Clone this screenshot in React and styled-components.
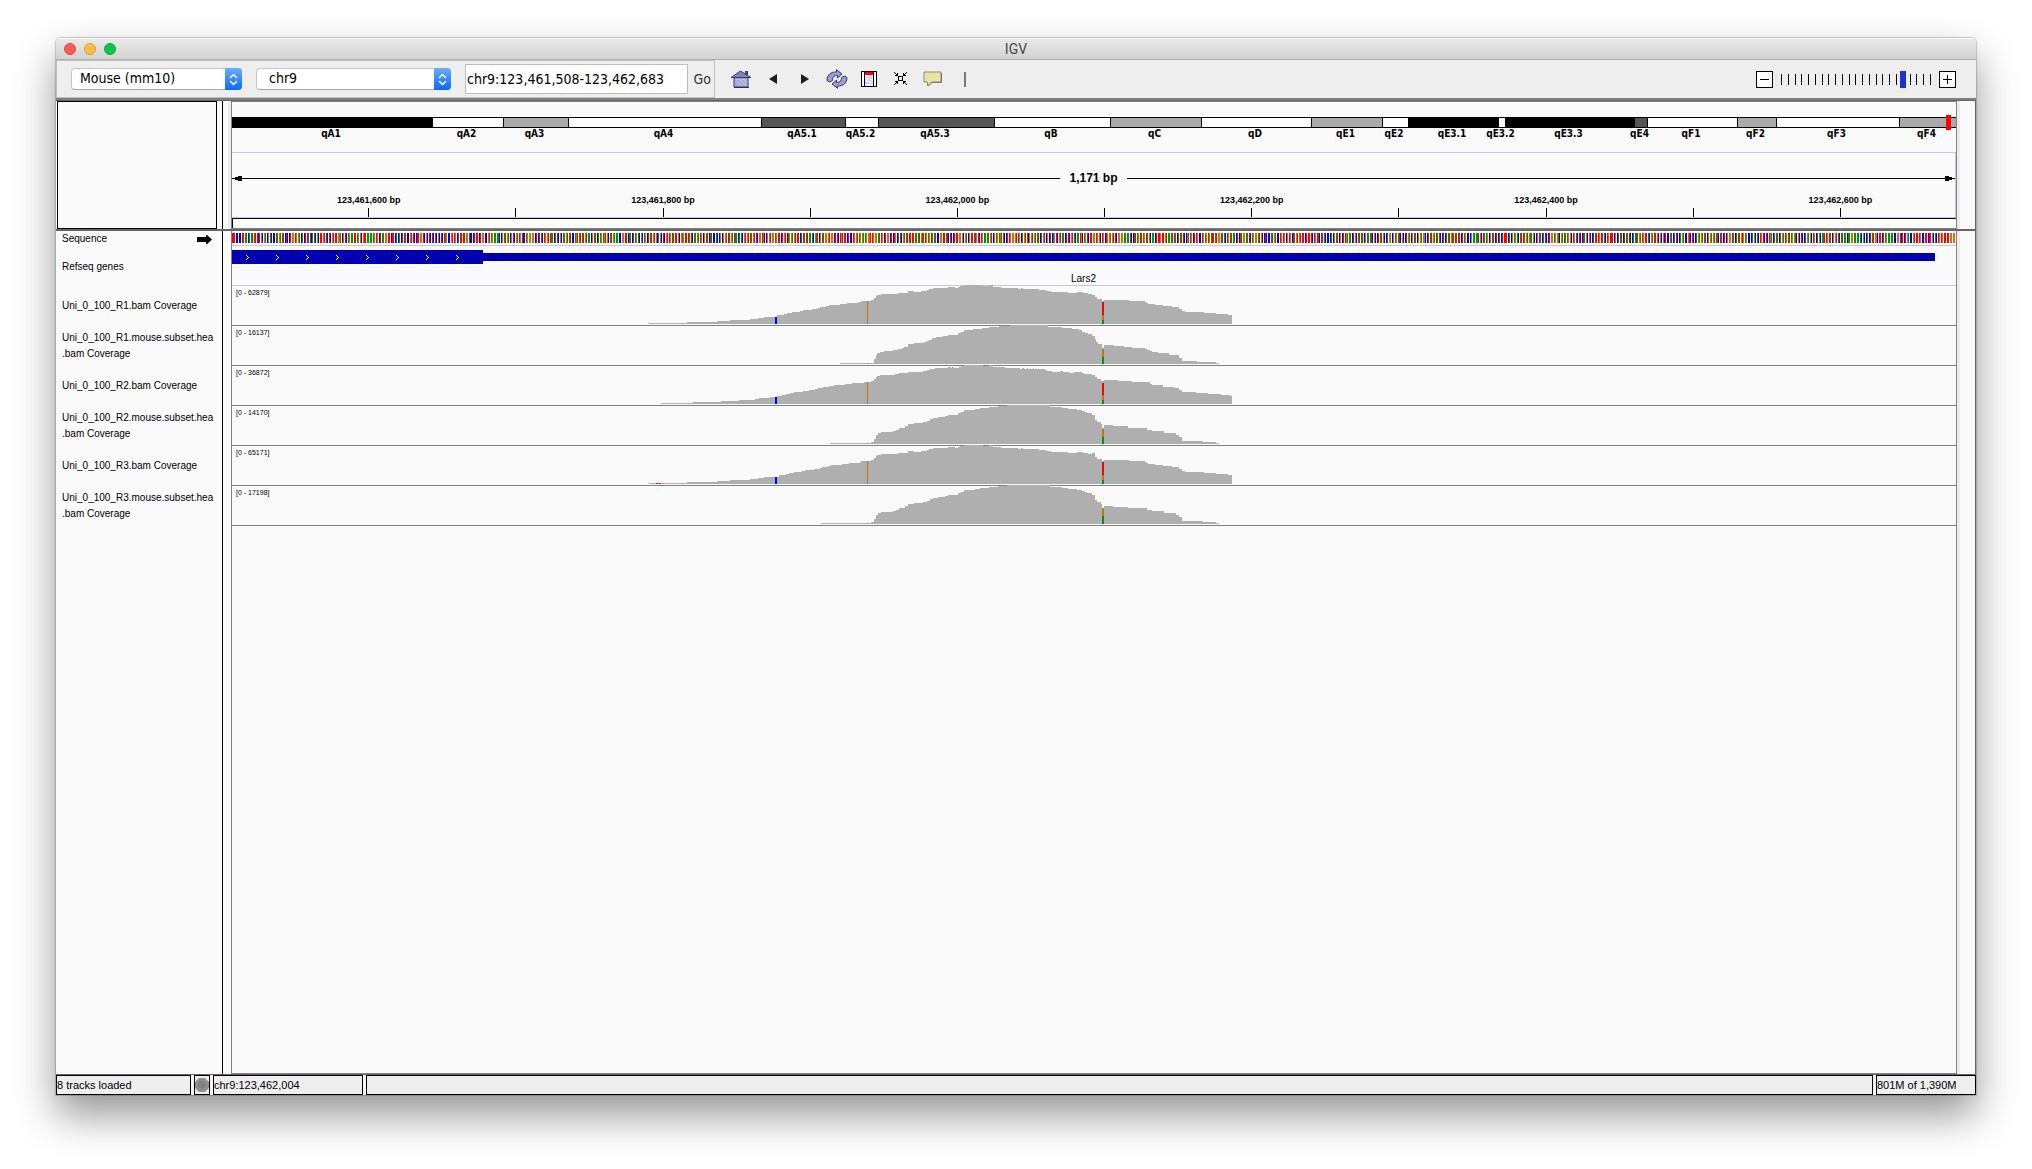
import React, { useState } from "react";
import styled, { createGlobalStyle } from "styled-components";

const LUCIDA = '"DejaVu Sans Condensed", "DejaVu Sans", sans-serif';
const ARIAL = '"Liberation Sans", Arial, sans-serif';

const GlobalStyle = createGlobalStyle`
  *, *::before, *::after { box-sizing: border-box; }
  body { margin: 0; background: #fff; font-family: ${ARIAL}; color: #000; }
  button, input, select { font: inherit; color: inherit; margin: 0; }
`;

/* ---------- data ---------- */

const BANDS = [
  ["qA1", 200, "#000"], ["qA2", 71, "#fff"], ["qA3", 65, "#aaa"], ["qA4", 193, "#fff"],
  ["qA5.1", 84, "#555"], ["qA5.2", 33, "#fff"], ["qA5.3", 116, "#555"], ["qB", 116, "#fff"],
  ["qC", 91, "#aaa"], ["qD", 110, "#fff"], ["qE1", 71, "#aaa"], ["qE2", 26, "#fff"],
  ["qE3.1", 90, "#000"], ["qE3.2", 7, "#fff"], ["qE3.3", 129, "#000"], ["qE4", 13, "#555"],
  ["qF1", 90, "#fff"], ["qF2", 39, "#aaa"], ["qF3", 123, "#fff"], ["qF4", 57, "#aaa"],
];

const TICKS = [
  "123,461,600 bp", "", "123,461,800 bp", "", "123,462,000 bp", "",
  "123,462,200 bp", "", "123,462,400 bp", "", "123,462,600 bp",
];

const WIDTH = 1724;

const deep = [
  [417, 1], [455, 2], [485, 3], [498, 4], [518, 5], [526, 6], [532, 7], [545, 9], [552, 10],
  [555, 11], [560, 12], [568, 13], [571, 14], [580, 15], [586, 16], [588, 17], [594, 18],
  [597, 19], [608, 20], [615, 21], [626, 22], [629, 23], [639, 24], [642, 26], [644, 28],
  [645, 29], [649, 30], [666, 31], [676, 33], [682, 32], [689, 33], [695, 34], [697, 35],
  [701, 36], [716, 37], [723, 36], [726, 37], [728, 38], [732, 39], [751, 38], [757, 39],
  [761, 37], [769, 36], [786, 35], [789, 36], [791, 35], [807, 34], [814, 33], [819, 32],
  [836, 31], [845, 32], [851, 31], [856, 30], [860, 29], [863, 27], [865, 25], [870, 23],
  [872, 24], [897, 23], [913, 22], [914, 21], [916, 20], [923, 19], [931, 18], [940, 17],
  [947, 15], [950, 13], [953, 12], [972, 11], [984, 10], [996, 9], [1000, 0],
];

const deepR2 = [
  [429, 1], [461, 2], [489, 3], [507, 4], [523, 5], [527, 6], [538, 7], [545, 8], [550, 9],
  [554, 10], [558, 11], [562, 12], [571, 13], [577, 14], [583, 15], [586, 16], [591, 17],
  [597, 18], [602, 19], [613, 20], [620, 21], [632, 22], [639, 23], [642, 25], [644, 27],
  [645, 28], [648, 29], [663, 30], [667, 31], [676, 32], [691, 33], [695, 34], [698, 35],
  [703, 36], [716, 37], [719, 36], [720, 37], [722, 36], [727, 37], [729, 38], [732, 39],
  [751, 38], [757, 39], [761, 37], [773, 36], [788, 35], [790, 36], [792, 35], [795, 36],
  [796, 35], [801, 36], [802, 35], [813, 34], [815, 33], [820, 32], [828, 33], [831, 32],
  [837, 31], [842, 32], [850, 31], [852, 30], [860, 29], [863, 27], [865, 25], [869, 23],
  [872, 24], [886, 23], [900, 22], [918, 20], [920, 19], [931, 17], [942, 16], [947, 14],
  [950, 12], [964, 11], [976, 10], [989, 9], [998, 8], [1000, 0],
];

const deepR3 = deep.map(([x, h]) =>
  x >= 545 && x < 629 ? [x + 2, h] : x === 860 ? [x, 31] : [x, h]
);

const subset = [
  [608, 1], [642, 5], [644, 9], [645, 11], [648, 12], [652, 13], [661, 14], [666, 15], [670, 16],
  [672, 17], [676, 20], [682, 21], [692, 22], [695, 23], [697, 24], [700, 26], [704, 27],
  [711, 28], [716, 29], [726, 31], [729, 32], [732, 34], [741, 35], [750, 36], [757, 37],
  [767, 38], [778, 39], [816, 37], [830, 36], [840, 35], [847, 34], [850, 32], [853, 31],
  [856, 30], [860, 28], [863, 25], [864, 22], [866, 20], [870, 16], [872, 19], [882, 18],
  [892, 17], [900, 16], [913, 15], [915, 14], [918, 13], [920, 12], [926, 11], [937, 9],
  [947, 6], [950, 3], [965, 2], [984, 1], [987, 0],
];

const subsetR2 = [
  [598, 1], [639, 2], [642, 5], [644, 9], [646, 11], [649, 12], [661, 13], [664, 14], [667, 16],
  [673, 18], [676, 20], [682, 21], [691, 22], [695, 23], [698, 25], [701, 26], [706, 27],
  [713, 28], [716, 29], [726, 31], [729, 32], [732, 34], [743, 35], [748, 36], [757, 37],
  [766, 38], [775, 39], [818, 37], [830, 36], [836, 35], [845, 34], [850, 33], [852, 32],
  [855, 31], [860, 29], [863, 24], [865, 22], [869, 20], [870, 16], [872, 19], [881, 18],
  [896, 16], [915, 14], [920, 13], [932, 11], [944, 9], [947, 7], [950, 3], [971, 2],
  [984, 1], [987, 0],
];

const subsetR3 = subsetR2.map(([x, h]) =>
  x === 598 ? [589, 1] : x === 872 ? [x, 18] : x === 881 ? [x, 17] : [x, h]
);

const RED = "#ff0000";
const BLUE = "#0000ff";
const ORANGE = "#d17105";
const GREEN = "#009600";

/* each variant is [x, width, from height, to height, colour] */
const deepVariants = (split) => [
  [543, 2, 0, 7, BLUE],
  [635, 1, 0, split + 1, ORANGE],
  [870, 2, 9, split, RED],
  [870, 2, 4, 9, ORANGE],
  [870, 2, 0, 4, GREEN],
];
const subsetVariants = (top) => [
  [635, 1, 0, 1, ORANGE],
  [870, 2, top - 8, top, ORANGE],
  [870, 2, 0, top - 8, GREEN],
];

const TRACKS = [
  { name: ["Uni_0_100_R1.bam Coverage"], range: "[0 - 62879]", steps: deep, variants: deepVariants(22) },
  { name: ["Uni_0_100_R1.mouse.subset.hea", ".bam Coverage"], range: "[0 - 16137]", steps: subset, variants: subsetVariants(15) },
  { name: ["Uni_0_100_R2.bam Coverage"], range: "[0 - 36872]", steps: deepR2, variants: deepVariants(21) },
  { name: ["Uni_0_100_R2.mouse.subset.hea", ".bam Coverage"], range: "[0 - 14170]", steps: subsetR2, variants: subsetVariants(15) },
  {
    name: ["Uni_0_100_R3.bam Coverage"], range: "[0 - 65171]", steps: deepR3,
    variants: [[424, 2, 0, 1, RED], [427, 2, 0, 1, RED], ...deepVariants(22)],
  },
  { name: ["Uni_0_100_R3.mouse.subset.hea", ".bam Coverage"], range: "[0 - 17198]", steps: subsetR3, variants: subsetVariants(16) },
];

const BASELINE = 38;

function areaPath(steps) {
  let d = `M${steps[0][0]} ${BASELINE}`;
  steps.forEach(([x, h]) => {
    d += `H${x}V${BASELINE - h}`;
  });
  return d + "Z";
}

/* one thin bar per base, grouped into one path per nucleotide colour */
function sequencePaths() {
  const colours = [GREEN, BLUE, ORANGE, RED];
  const paths = ["", "", "", ""];
  let seed = 20117;
  for (let i = 0; i < 1171; i += 1) {
    seed = (seed * 1103515245 + 12345) % 2147483648;
    const r = (seed >> 12) % 100;
    const base = r < 24 ? 0 : r < 48 ? 1 : r < 71 ? 2 : 3;
    paths[base] += `M${Math.floor((i * WIDTH) / 1171)} 0h1v10h-1z`;
  }
  return paths.map((d, i) => ({ d, fill: colours[i] }));
}
const SEQUENCE = sequencePaths();

/* ---------- window ---------- */

const Desktop = styled.div`
  min-height: 100vh;
  padding: 38px 56px 74px;
  display: flex;
`;

const Window = styled.main`
  flex: 1;
  min-width: 0;
  display: flex;
  flex-direction: column;
  border-radius: 5px 5px 0 0;
  background: #fafafa;
  box-shadow: 0 0 1px 1px rgba(0, 0, 0, 0.2), 0 20px 40px rgba(0, 0, 0, 0.42);
`;

const TitleBar = styled.header`
  display: grid;
  grid-template-columns: 1fr auto 1fr;
  align-items: center;
  height: 22px;
  padding: 0 8px;
  border-radius: 5px 5px 0 0;
  border-top: 1px solid #f6f6f6;
  border-bottom: 1px solid #adadad;
  background: linear-gradient(#eaeaea, #d2d2d2);
`;

const Lights = styled.div`
  display: flex;
  gap: 8px;
`;

const Light = styled.button`
  width: 12px;
  height: 12px;
  padding: 0;
  border: 1px solid ${(p) => p.$edge};
  border-radius: 50%;
  background: ${(p) => p.$fill};
`;

const Title = styled.h1`
  margin: 0;
  font: 400 14px/18px Roboto, Inter, sans-serif;
  color: #4a4a4a;
`;

/* ---------- toolbar ---------- */

const Toolbar = styled.div`
  display: flex;
  align-items: center;
  height: 38px;
  padding-right: 20px;
  background: #eee;
  font: 14px/18px ${LUCIDA};
`;

const Locator = styled.form`
  display: flex;
  align-items: center;
  width: 659px;
  height: 38px;
  padding: 0 3px 0 14px;
  border: 1px solid #c0c0c0;
`;

const Combo = styled.span`
  position: relative;
  flex: none;
  width: ${(p) => p.$width};
  height: 22px;
  margin-right: 14px;
`;

const Select = styled.select`
  appearance: none;
  width: 100%;
  height: 22px;
  padding: 0 20px 2px ${(p) => p.$indent};
  border: 1px solid #c6c6c6;
  border-bottom-color: #a8a8a8;
  border-radius: 4px;
  background: #fff;
`;

const Stepper = styled.span`
  position: absolute;
  top: 0;
  right: 0;
  display: flex;
  align-items: center;
  justify-content: center;
  width: 17px;
  height: 22px;
  border-radius: 0 4px 4px 0;
  background: linear-gradient(#6aaefb, #0a68fb);
  pointer-events: none;
`;

const LocusInput = styled.input`
  flex: 1;
  min-width: 0;
  height: 30px;
  padding: 0 1px;
  border: 1px solid #bdbdbd;
  border-radius: 0;
  background: #fff;
`;

const GoButton = styled.button`
  width: 23px;
  padding: 0;
  border: 0;
  background: none;
  color: #333;
  text-align: right;
`;

const Tools = styled.div`
  display: flex;
  align-items: center;
  margin-left: 10px;
`;

const ToolButton = styled.button`
  display: flex;
  align-items: center;
  justify-content: center;
  width: 32px;
  height: 28px;
  padding: 0;
  border: 0;
  background: none;
`;

const Zoom = styled.div`
  display: flex;
  align-items: center;
  gap: 8px;
  margin-left: auto;
`;

const ZoomButton = styled.button`
  display: flex;
  align-items: center;
  justify-content: center;
  width: 17px;
  height: 17px;
  padding: 0;
  border: 1px solid #000;
  border-radius: 0;
  background: #fff;
`;

const ZoomScale = styled.div`
  position: relative;
  display: flex;
  justify-content: space-between;
  width: 150px;
  height: 11px;
`;

const ZoomMark = styled.span`
  width: 1px;
  height: 11px;
  background: #000;
`;

const ZoomRange = styled.input`
  appearance: none;
  position: absolute;
  top: -3px;
  left: -3px;
  width: 155px;
  height: 17px;
  background: transparent;
  &::-webkit-slider-thumb {
    appearance: none;
    width: 6px;
    height: 17px;
    background: #1a32d2;
  }
`;

/* ---------- body ---------- */

const Rule = styled.div`
  flex: none;
  height: ${(p) => p.$size};
  background: ${(p) => p.$paint};
`;

const Section = styled.section`
  display: flex;
  flex: ${(p) => (p.$grow ? "1 0 auto" : "none")};
  padding-left: 1px;
  border-right: 1px solid #666;
  background: #fafafa;
`;

const Names = styled.div`
  flex: none;
  width: 160px;
  margin-right: 5px;
  border: ${(p) => (p.$boxed ? "1px solid #000" : "0")};
`;

const Gutter = styled.div`
  flex: none;
  width: 9px;
  border-left: 1px solid #000;
  background: linear-gradient(90deg, #fafafa 5px, ${(p) => p.$shade} 5px);
`;

const Panel = styled.div`
  flex: 1;
  min-width: 0;
  border: solid #808080;
  border-width: ${(p) => (p.$open ? "0 1px 1px" : "1px")};
`;

const ScrollGutter = styled.div`
  flex: none;
  width: 18px;
  border-left: 3px solid #ececec;
`;

const Ideogram = styled.div`
  position: relative;
  margin-top: 15px;
`;

const BandRow = styled.div`
  display: flex;
  height: 11px;
  border: solid #000;
  border-width: 1px 0;
`;

const Band = styled.div`
  flex: ${(p) => p.$span} 0 0;
  min-width: 0;
  background: ${(p) => p.$fill};
  box-shadow: inset 1px 0 #000;
`;

const BandNames = styled.div`
  display: flex;
  margin: 0 1px 12px -1px;
  font: 700 10px/12px ${LUCIDA};
`;

const BandName = styled.div`
  flex: ${(p) => p.$span} 0 0;
  min-width: 0;
  display: flex;
  justify-content: center;
  white-space: nowrap;
`;

const Locus = styled.div`
  position: absolute;
  top: -2px;
  right: 5px;
  width: 5px;
  height: 15px;
  background: #ff0000;
`;

const Ruler = styled.div`
  height: 66px;
  padding-top: 18px;
  border: solid #c8c8d8;
  border-width: 1px 1px 1px 0;
`;

const SpanRow = styled.div`
  display: flex;
  align-items: center;
  height: 14px;
  margin-bottom: 9px;
  font: 700 12px/14px ${ARIAL};
`;

const SpanLine = styled.span`
  flex: 1;
  height: 1px;
  background: #000;
`;

const SpanText = styled.span`
  padding: 0 9px;
`;

const TickRow = styled.div`
  display: flex;
`;

const Spacer = styled.span`
  flex: ${(p) => p.$span} 0 0;
`;

const Tick = styled.div`
  flex: 147 0 0;
  min-width: 0;
  display: flex;
  flex-direction: column;
  align-items: center;
  gap: 2px;
  font: 700 9px/12px ${ARIAL};
  white-space: nowrap;
  &::after {
    content: "";
    width: 1px;
    height: 9px;
    background: #000;
  }
`;

const TickText = styled.span`
  height: 12px;
`;

const RegionLane = styled.div`
  height: 10px;
  border: solid #000;
  border-width: 1px 0 0 1px;
`;

/* ---------- tracks ---------- */

const TrackName = styled.div`
  display: flex;
  align-items: center;
  justify-content: space-between;
  height: ${(p) => p.$height};
  padding-left: 5px;
  font: 10px/16px ${ARIAL};
  white-space: nowrap;
`;

const NameArrow = styled.svg`
  flex: none;
  margin-right: 5px;
`;

const NameLine = styled.div``;

const SequenceTrack = styled.div`
  height: 15px;
  padding-top: 2px;
  border-bottom: 1px solid #c8c8d8;
`;

const GeneTrack = styled.div`
  height: 40px;
  padding-top: 4px;
  border-bottom: 1px solid #c8c8d8;
`;

const GeneRow = styled.div`
  display: flex;
  align-items: flex-start;
  height: 14px;
`;

const Exon = styled.div`
  flex: 251 0 0;
  display: flex;
  height: 14px;
  background: #0000b2;
`;

const Strand = styled.span`
  display: flex;
  align-items: center;
  justify-content: center;
  flex: 30 0 0;
`;

const Utr = styled.div`
  flex: 1452 0 0;
  height: 8px;
  margin-top: 3px;
  background: #0000b2;
`;

const GeneName = styled.div`
  display: flex;
  margin-top: 9px;
  font: 10px/12px ${ARIAL};
`;

const GeneText = styled.span`
  flex: 1703 0 0;
  text-align: center;
`;

const CoverageTrack = styled.div`
  position: relative;
  height: 40px;
  border-bottom: 1px solid #808080;
`;

const Range = styled.span`
  position: absolute;
  top: 2px;
  left: 4px;
  font: 7px/10px ${ARIAL};
`;

const Plot = styled.svg`
  display: block;
  width: 100%;
  height: ${(p) => p.$height};
  overflow: visible;
`;

/* ---------- status ---------- */

const StatusBar = styled.footer`
  display: flex;
  flex: none;
  gap: 3px;
  height: 20px;
  background: #f6f6f6;
`;

const StatusCell = styled.div`
  flex: ${(p) => (p.$width ? "none" : "1")};
  width: ${(p) => p.$width || "auto"};
  display: flex;
  align-items: center;
  overflow: hidden;
  border: 1px solid #000;
  background: #eee;
  font: 11px/16px ${ARIAL};
  white-space: nowrap;
`;

/* ---------- icons ---------- */

const Chevrons = () => (
  <svg width="9" height="13" viewBox="0 0 9 13" fill="none" stroke="#fff" strokeWidth="1.5" strokeLinecap="round" strokeLinejoin="round">
    <path d="M1.5 4.5 4.5 1.5l3 3M1.5 8.5l3 3 3-3" />
  </svg>
);

const HomeIcon = () => (
  <svg width="22" height="18" viewBox="0 0 22 18">
    <path d="M4 8h14v9H4z" fill="#a9a9d6" stroke="#3c3c78" />
    <path d="M5 9h12M6 11l6 5M9 9l7 7M13 9l4 4" stroke="#c8c8ea" />
    <path d="M15 1h3v4h-3z" fill="#3c3c78" />
    <path d="M1 7.5 10.500 1 21 7.500z" fill="#8484bc" stroke="#3c3c78" />
    <path d="M4 17.500h15" stroke="#2c2c60" />
  </svg>
);

const BackIcon = () => (
  <svg width="8" height="10" viewBox="0 0 8 10"><path d="M8 0v10L0 5z" fill="#1c1c1c" /></svg>
);

const ForwardIcon = () => (
  <svg width="8" height="10" viewBox="0 0 8 10"><path d="M0 0v10l8-5z" fill="#1c1c1c" /></svg>
);

const RefreshIcon = () => (
  <svg width="22" height="20" viewBox="0 0 22 20" fill="#9c9cd0" stroke="#34346c" strokeWidth="1" strokeLinejoin="round">
    <path d="M1 11.500C1 6 5 2.500 10.500 3V.7L16 5l-4.500 4V6.700C8 6.300 6.500 8 6.500 11.500L3.500 13z" />
    <path d="M21 8.500c0 5.500-4 9-9.500 8.500v2.300L6 15l4.500-4v2.300c3.500.4 5-1.300 5-4.800l3-1.500z" />
  </svg>
);

const RegionIcon = () => (
  <svg width="16" height="16" viewBox="0 0 16 16" shapeRendering="crispEdges">
    <path d="M0 0h16v16H0z" fill="#000" />
    <path d="M1 1h2v14H1zM13 1h2v14h-2z" fill="#fff" />
    <path d="M4 1h8v14H4z" fill="#eef" />
    <path d="M4 1h8v3H4z" fill="#f00" />
    <path d="M4 6h3v1H4zM8 5h3v2H8zM6 8h2v2H6zM10 10h2v1h-2z" fill="#fcc" />
    <path d="M7 7h4v1H7zM4 11h4v2H4zM9 12h3v1H9zM8 9h3v1H8z" fill="#ccf" />
  </svg>
);

const FitIcon = () => (
  <svg width="14" height="14" viewBox="0 0 14 14" fill="none" stroke="#000" shapeRendering="crispEdges">
    <path d="M4.500 4.500h4v4h-4z" />
    <path d="M0 0l4 4M13 0 9 4M0 13l4-4M13 13 9 9" shapeRendering="auto" />
    <path d="M3.500 1v2.500H1M9.500 1v2.500H12M1 9.500h2.500V12M12 9.500H9.500V12" />
  </svg>
);

const BubbleIcon = () => (
  <svg width="20" height="16" viewBox="0 0 20 16">
    <path d="M1 1h17v10H8.500L4.500 15v-4H1z" fill="#e8e4a4" stroke="#8c8c7c" />
    <path d="M18.500 2v9.500H9l-3.500 3.500" fill="none" stroke="#777" />
  </svg>
);

const BarIcon = () => (
  <svg width="2" height="15" viewBox="0 0 2 15"><path d="M0 0h2v15H0z" fill="#777" /></svg>
);

const TOOLS = [
  ["Home", HomeIcon], ["Back", BackIcon], ["Forward", ForwardIcon], ["Refresh", RefreshIcon],
  ["Define region", RegionIcon], ["Fit to window", FitIcon], ["Popup text", BubbleIcon], ["Ruler line", BarIcon],
];

/* ---------- parts ---------- */

function Chooser({ label, width, indent, value }) {
  return (
    <Combo $width={width}>
      <Select aria-label={label} $indent={indent} defaultValue={value}>
        <option>{value}</option>
      </Select>
      <Stepper><Chevrons /></Stepper>
    </Combo>
  );
}

function ZoomControl() {
  const [level, setLevel] = useState(18);
  const step = (by) => setLevel((v) => Math.min(22, Math.max(0, v + by)));
  return (
    <Zoom>
      <ZoomButton type="button" aria-label="Zoom out" onClick={() => step(-1)}>
        <svg width="9" height="9" viewBox="0 0 9 9"><path d="M0 4h9v1H0z" /></svg>
      </ZoomButton>
      <ZoomScale>
        {Array.from({ length: 23 }, (_, i) => <ZoomMark key={i} />)}
        <ZoomRange
          type="range" aria-label="Zoom level" min="0" max="22" value={level}
          onChange={(e) => setLevel(Number(e.target.value))}
        />
      </ZoomScale>
      <ZoomButton type="button" aria-label="Zoom in" onClick={() => step(1)}>
        <svg width="9" height="9" viewBox="0 0 9 9"><path d="M0 4h9v1H0zM4 0h1v9H4z" /></svg>
      </ZoomButton>
    </Zoom>
  );
}

function Header() {
  return (
    <Panel>
      <Ideogram>
        <BandRow>
          {BANDS.map(([name, span, fill]) => <Band key={name} $span={span} $fill={fill} />)}
        </BandRow>
        <Locus />
      </Ideogram>
      <BandNames>
        {BANDS.map(([name, span]) => <BandName key={name} $span={span}>{name}</BandName>)}
      </BandNames>
      <Ruler>
        <SpanRow>
          <svg width="10" height="5" viewBox="0 0 10 5"><path d="M0 2h3V1h3V0h4v5H6V4H3V3H0z" /></svg>
          <SpanLine />
          <SpanText>1,171 bp</SpanText>
          <SpanLine />
          <svg width="10" height="5" viewBox="0 0 10 5"><path d="M10 2H7V1H4V0H0v5h4V4h3V3h3z" /></svg>
        </SpanRow>
        <TickRow>
          <Spacer $span={63} />
          {TICKS.map((text, i) => <Tick key={i}><TickText>{text}</TickText></Tick>)}
          <Spacer $span={41} />
        </TickRow>
      </Ruler>
      <RegionLane />
    </Panel>
  );
}

function Coverage({ track }) {
  return (
    <CoverageTrack>
      <Plot $height="39px" viewBox={`0 0 ${WIDTH} 39`} preserveAspectRatio="none" shapeRendering="crispEdges">
        <path d={areaPath(track.steps)} fill="#afafaf" />
        {track.variants.map(([x, w, from, to, fill], i) => (
          <rect key={i} x={x} y={BASELINE - to} width={w} height={to - from} fill={fill} />
        ))}
      </Plot>
      <Range>{track.range}</Range>
    </CoverageTrack>
  );
}

function Tracks() {
  return (
    <Panel $open>
      <SequenceTrack>
        <Plot $height="10px" viewBox={`0 0 ${WIDTH} 10`} preserveAspectRatio="none" shapeRendering="crispEdges">
          {SEQUENCE.map((p) => <path key={p.fill} d={p.d} fill={p.fill} />)}
        </Plot>
      </SequenceTrack>
      <GeneTrack>
        <GeneRow>
          <Exon>
            {Array.from({ length: 8 }, (_, i) => (
              <Strand key={i}>
                <svg width="3" height="5" viewBox="0 0 3 5" fill="#fff" shapeRendering="crispEdges">
                  <path d="M0 0h1v1H0zM1 1h1v1H1zM2 2h1v1H2zM1 3h1v1H1zM0 4h1v1H0z" />
                </svg>
              </Strand>
            ))}
            <Spacer $span={11} />
          </Exon>
          <Utr />
          <Spacer $span={21} />
        </GeneRow>
        <GeneName>
          <GeneText>Lars2</GeneText>
          <Spacer $span={21} />
        </GeneName>
      </GeneTrack>
      {TRACKS.map((track) => <Coverage key={track.range} track={track} />)}
    </Panel>
  );
}

export default function App() {
  return (
    <>
      <GlobalStyle />
      <Desktop>
        <Window>
          <TitleBar>
            <Lights>
              <Light aria-label="Close" $fill="#fc5b57" $edge="#e2463f" />
              <Light aria-label="Minimize" $fill="#fdbe41" $edge="#e0a033" />
              <Light aria-label="Zoom window" $fill="#06c947" $edge="#10a83a" />
            </Lights>
            <Title>IGV</Title>
          </TitleBar>
          <Toolbar>
            <Locator onSubmit={(e) => e.preventDefault()}>
              <Chooser label="Genome" width="171px" indent="8px" value="Mouse (mm10)" />
              <Chooser label="Chromosome" width="195px" indent="12px" value="chr9" />
              <LocusInput aria-label="Locus" defaultValue="chr9:123,461,508-123,462,683" />
              <GoButton type="submit">Go</GoButton>
            </Locator>
            <Tools>
              {TOOLS.map(([label, Icon]) => (
                <ToolButton key={label} type="button" aria-label={label}><Icon /></ToolButton>
              ))}
            </Tools>
            <ZoomControl />
          </Toolbar>
          <Rule $size="3px" $paint="linear-gradient(#808080 2px, #666 2px)" />
          <Section>
            <Names $boxed />
            <Gutter $shade="#ececec" />
            <Header />
            <ScrollGutter />
          </Section>
          <Rule $size="2px" $paint="#666" />
          <Section $grow>
            <Names>
              <TrackName $height="16px">
                Sequence
                <NameArrow width="15" height="9" viewBox="0 0 15 9">
                  <path d="M0 2h9V0h1l5 4.500L10 9H9V7H0z" />
                </NameArrow>
              </TrackName>
              <TrackName $height="39px">Refseq genes</TrackName>
              {TRACKS.map((track) => (
                <TrackName key={track.range} $height="40px">
                  <div>
                    {track.name.map((line) => <NameLine key={line}>{line}</NameLine>)}
                  </div>
                </TrackName>
              ))}
            </Names>
            <Gutter $shade="#fafafa" />
            <Tracks />
            <ScrollGutter />
          </Section>
          <Rule $size="1px" $paint="#666" />
          <StatusBar>
            <StatusCell $width="135px">8 tracks loaded</StatusCell>
            <StatusCell $width="16px">
              <svg width="14" height="14" viewBox="0 0 14 14">
                <path d="M4 0h6l4 4v6l-4 4H4l-4-4V4z" fill="#909090" />
                <circle cx="7" cy="7" r="4" fill="#808080" />
              </svg>
            </StatusCell>
            <StatusCell $width="150px">chr9:123,462,004</StatusCell>
            <StatusCell />
            <StatusCell $width="100px">801M of 1,390M</StatusCell>
          </StatusBar>
        </Window>
      </Desktop>
    </>
  );
}
